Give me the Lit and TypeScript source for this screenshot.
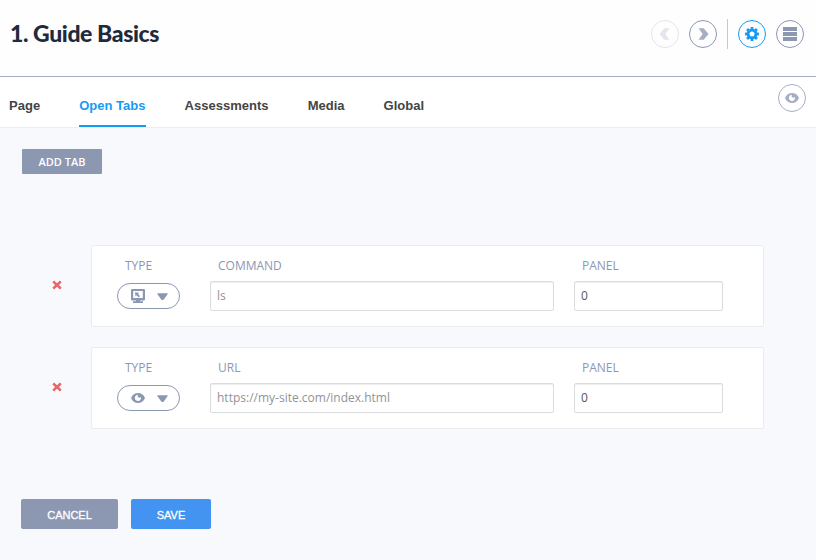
import { LitElement, html, css, svg } from "lit";
import { customElement, property } from "lit/decorators.js";

const gearTeeth = [0, 45, 90, 135, 180, 225, 270, 315];

const icons = {
  left: svg`<path d="M1.500 7 6.300 1.200h5.200L7.300 7l4.200 5.800H6.300z" fill="currentColor"/>`,
  right: svg`<path d="M2.500 1.200h5.200L12.500 7l-4.800 5.800H2.500L6.700 7z" fill="currentColor"/>`,
  gear: svg`<circle cx="7" cy="7" r="3.9" fill="none" stroke="currentColor" stroke-width="2.8"/>
    ${gearTeeth.map((a) => svg`<rect x="5.6" y="0" width="2.8" height="3" fill="currentColor" transform="rotate(${a} 7 7)"/>`)}`,
  menu: svg`<path d="M0 0h14v4H0zM0 5h14v4H0zM0 10h14v4H0z" fill="currentColor"/>`,
  eye: svg`<path d="M0 7C1.400 3.600 4 1.900 7 1.900s5.600 1.700 7 5.100c-1.400 3.400-4 5.100-7 5.100S1.400 10.400 0 7z" fill="currentColor"/>
    <path d="M7 3.800c-.7 1.100-.4 2 .2 2.500.7.600 1.800.5 2.700-.3A3.100 3.100 0 1 1 7 3.800z" fill="#fff"/>`,
  monitor: svg`<path fill-rule="evenodd" d="M1 0h12a1 1 0 0 1 1 1v9.500a1 1 0 0 1-1 1H1a1 1 0 0 1-1-1V1a1 1 0 0 1 1-1zM2.200 2.100v7h9.600v-7z" fill="currentColor"/>
    <path d="M5 11h4v1.200h3V14H2v-1.800h3zM4 3.300l4.200.5-1.200 1.100 2 2.200-1.300 1.300-2-2.200L4.500 7.500z" fill="currentColor"/>`,
  close: svg`<path d="M3 .8 7 4.500 11 .8 13.600 3.300 9.800 7l3.800 3.700L11 13.200 7 9.500 3 13.200.4 10.700 4.200 7 .4 3.300z" fill="currentColor"/>`,
  caret: svg`<path d="M.6 3h12.800q.3.800-.2 1.500L8.400 11q-1.400 1.200-2.800 0L.8 4.500Q.3 3.800.6 3z" fill="currentColor"/>`,
};
type IconName = keyof typeof icons;

@customElement("ui-icon")
class UiIcon extends LitElement {
  static styles = css`
    :host { display: block; width: 14px; height: 14px; flex: none; }
    svg { display: block; width: 100%; height: 100%; }
  `;
  @property() name: IconName = "eye";
  render() {
    return html`<svg viewBox="0 0 14 14">${icons[this.name]}</svg>`;
  }
}

@customElement("tab-row")
class TabRow extends LitElement {
  static styles = css`
    :host { display: flex; align-items: center; height: 82px; }
    * { box-sizing: border-box; }
    .remove { width: 10px; height: 10px; margin: 0 29px 2px 52px; color: #e8686b; }
    .card { display: flex; width: 673px; height: 82px; padding: 11px 0 0 25px; background: #fff; border: 1px solid #ececee; border-radius: 2px; }
    .label { height: 17px; margin: 0 0 7px 8px; font-size: 12px; line-height: 17px; color: #8c97b2; }
    .type { width: 93px; }
    .value { width: 344px; margin-right: 20px; }
    .panel { width: 149px; }
    .pill { display: flex; align-items: center; width: 63px; height: 26px; margin-top: 9px; padding-left: 13px; gap: 12px; border: 1px solid #8c97b2; border-radius: 13px; color: #8c97b2; }
    .type .label { margin-bottom: 0; }
    .caret { width: 11px; height: 11px; }
    .input { height: 30px; padding-left: 6px; border: 1px solid #dcdcdc; border-radius: 2px; box-shadow: inset 0 1px 1px #eee; font-size: 12px; line-height: 28px; color: #939393; }
    .number { color: #555; }
  `;
  @property() kind: IconName = "monitor";
  @property() label = "";
  @property() value = "";
  render() {
    return html`<ui-icon class="remove" name="close"></ui-icon>
      <div class="card">
        <div class="type"><div class="label">TYPE</div>
          <div class="pill"><ui-icon name=${this.kind}></ui-icon><ui-icon class="caret" name="caret"></ui-icon></div></div>
        <div class="value"><div class="label">${this.label}</div><div class="input">${this.value}</div></div>
        <div class="panel"><div class="label">PANEL</div><div class="input number">0</div></div>
      </div>`;
  }
}

@customElement("app-root")
class AppRoot extends LitElement {
  static styles = css`
    :host { display: block; width: 816px; height: 560px; overflow: hidden; background: #f8f9fd; font-family: "Open Sans", sans-serif; }
    * { box-sizing: border-box; }
    header { display: flex; align-items: flex-start; height: 77px; padding: 18px 12px 0 10px; background: #fefefe; border-bottom: 1px solid #a5aec3; }
    h1 { margin: 0 auto 0 0; font: 900 23px/30px Lato, sans-serif; color: #1f2a3c; letter-spacing: -0.4px; white-space: nowrap; }
    .round { display: flex; align-items: center; justify-content: center; width: 28px; height: 28px; border: 1px solid currentColor; border-radius: 50%; color: #8c97b2; }
    .round.back { color: #e3e6ec; margin-right: 10px; }
    .round.next { color: #a5aec3; border-color: #8c97b2; }
    .round.settings { color: #169bf5; margin-right: 10px; }
    .actions { display: flex; padding-top: 2px; }
    .divider { width: 1px; height: 30px; margin: -1px 10px 0; background: #c3c9d7; }
    nav { display: flex; height: 51px; padding: 0 10px 0 9px; gap: 39px; background: #fff; border-bottom: 1px solid #ededf0; font: bold 13px/16px "Liberation Sans", sans-serif; letter-spacing: 0.02px; color: #444; }
    .tab { height: 50px; padding-top: 21px; white-space: nowrap; }
    .tab.active { color: #169bf5; border-bottom: 2px solid #169bf5; }
    .preview { margin: 7px 0 0 auto; color: #a5aec3; }
    .button { display: flex; align-items: center; justify-content: center; height: 30px; padding-top: 2px; border-radius: 2px; color: #fff; background: #8c97b2; font: 11px/16px "Liberation Sans", sans-serif; -webkit-text-stroke: 0.3px #fff; }
    .add { width: 80px; height: 25px; margin: 21px 0 71px 22px; padding-top: 0; font: 600 11px/16px "Open Sans", sans-serif; -webkit-text-stroke: 0; border-radius: 1px; }
    .rows { display: flex; flex-direction: column; gap: 20px; }
    footer { display: flex; gap: 13px; padding: 70px 0 0 21px; }
    .cancel { width: 97px; }
    .save { width: 80px; background: #4394f1; }
  `;
  render() {
    return html`
      <header>
        <h1>1. Guide Basics</h1>
        <div class="actions">
          <div class="round back"><ui-icon name="left"></ui-icon></div>
          <div class="round next"><ui-icon name="right"></ui-icon></div>
          <div class="divider"></div>
          <div class="round settings"><ui-icon name="gear"></ui-icon></div>
          <div class="round"><ui-icon name="menu"></ui-icon></div>
        </div>
      </header>
      <nav>
        ${["Page", "Open Tabs", "Assessments", "Media", "Global"].map(
          (t) => html`<div class="tab ${t === "Open Tabs" ? "active" : ""}">${t}</div>`
        )}
        <div class="round preview"><ui-icon name="eye"></ui-icon></div>
      </nav>
      <div class="button add">ADD TAB</div>
      <div class="rows">
        <tab-row kind="monitor" label="COMMAND" value="ls"></tab-row>
        <tab-row kind="eye" label="URL" value="https://my-site.com/index.html"></tab-row>
      </div>
      <footer>
        <div class="button cancel">CANCEL</div>
        <div class="button save">SAVE</div>
      </footer>`;
  }
}
